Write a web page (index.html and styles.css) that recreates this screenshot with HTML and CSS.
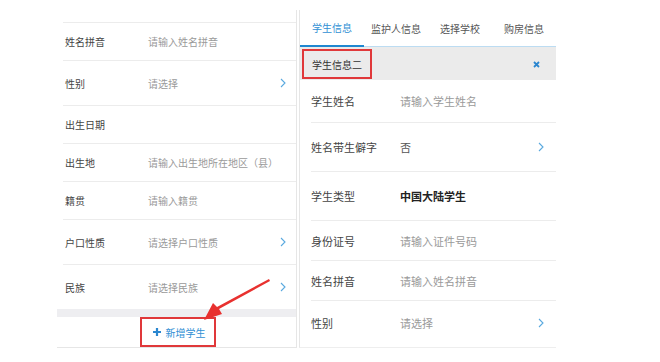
FILE: index.html
```html
<!DOCTYPE html>
<html lang="zh-CN">
<head>
  <meta charset="UTF-8">
  <meta name="viewport" content="width=device-width, initial-scale=1.0">
  <title>学生信息</title>
  <link rel="stylesheet" href="styles.css">
</head>
<body>
  <div class="page">
    <!-- left: first student form (scrolled) -->
    <div class="panel-left">
      <div class="form-row">
        <span class="label">姓名拼音</span>
        <span class="value">请输入姓名拼音</span>
      </div>
      <div class="form-row tall">
        <span class="label">性别</span>
        <span class="value">请选择</span>
        <svg class="chevron" width="6" height="10" viewBox="0 0 6 10"><polyline points="1,1 5,5 1,9"/></svg>
      </div>
      <div class="form-row">
        <span class="label">出生日期</span>
        <span class="value"></span>
      </div>
      <div class="form-row">
        <span class="label">出生地</span>
        <span class="value">请输入出生地所在地区（县）</span>
      </div>
      <div class="form-row">
        <span class="label">籍贯</span>
        <span class="value">请输入籍贯</span>
      </div>
      <div class="form-row tall">
        <span class="label">户口性质</span>
        <span class="value">请选择户口性质</span>
        <svg class="chevron" width="6" height="10" viewBox="0 0 6 10"><polyline points="1,1 5,5 1,9"/></svg>
      </div>
      <div class="form-row tall">
        <span class="label">民族</span>
        <span class="value">请选择民族</span>
        <svg class="chevron" width="6" height="10" viewBox="0 0 6 10"><polyline points="1,1 5,5 1,9"/></svg>
      </div>
      <div class="gap-strip"></div>
      <div class="add-bar">
        <span class="add-btn">
          <svg class="plus" width="8" height="8" viewBox="0 0 8 8"><path d="M4 0v8M0 4h8"/></svg>
          新增学生
        </span>
      </div>
    </div>

    <!-- right: tabs and second student -->
    <div class="panel-right">
      <div class="tabs">
        <span class="tab active">学生信息</span>
        <span class="tab">监护人信息</span>
        <span class="tab">选择学校</span>
        <span class="tab">购房信息</span>
      </div>
      <div class="section-head">
        <span class="section-title">学生信息二</span>
        <svg class="close" width="7" height="7" viewBox="0 0 7 7"><path d="M1 1l5 5M6 1l-5 5"/></svg>
      </div>
      <div class="form-row r1">
        <span class="label">学生姓名</span>
        <span class="value">请输入学生姓名</span>
      </div>
      <div class="form-row r2">
        <span class="label">姓名带生僻字</span>
        <span class="value filled">否</span>
        <svg class="chevron" width="6" height="10" viewBox="0 0 6 10"><polyline points="1,1 5,5 1,9"/></svg>
      </div>
      <div class="form-row r2">
        <span class="label">学生类型</span>
        <span class="value strong">中国大陆学生</span>
      </div>
      <div class="form-row r3">
        <span class="label">身份证号</span>
        <span class="value">请输入证件号码</span>
      </div>
      <div class="form-row r3">
        <span class="label">姓名拼音</span>
        <span class="value">请输入姓名拼音</span>
      </div>
      <div class="form-row r4">
        <span class="label">性别</span>
        <span class="value">请选择</span>
        <svg class="chevron" width="6" height="10" viewBox="0 0 6 10"><polyline points="1,1 5,5 1,9"/></svg>
      </div>
    </div>

    <svg class="pointer" width="80" height="50" viewBox="0 0 80 50">
      <polygon points="72,3 73,5 22,33 25,38 7,44 16,27 20,31" fill="#e8312f"/>
    </svg>
  </div>
</body>
</html>
```

FILE: styles.css
```css
* {
  margin: 0;
  padding: 0;
  box-sizing: border-box;
}

body {
  font-family: "Noto Sans CJK SC", "Noto Sans", sans-serif;
  background: #ffffff;
  color: #333333;
}

.page {
  position: relative;
  display: flex;
  gap: 2px;
  padding: 10px 0 0 57px;
  height: 362px;
}

/* left panel */
.panel-left {
  width: 240px;
  height: 338px;
  border-right: 1px solid #e6e6e6;
  border-bottom: 1px solid #e6e6e6;
  padding-top: 12px;
  font-size: 10px;
  display: flex;
  flex-direction: column;
}

.panel-left .form-row {
  height: 38px;
  margin-left: 6px;
  padding-left: 2px;
}

.panel-left .form-row.tall {
  height: 45px;
}

.panel-left .label {
  width: 83px;
}

.panel-left .chevron {
  margin-right: 10px;
}

.form-row {
  display: flex;
  align-items: center;
  border-top: 1px solid #ececec;
}

.label {
  flex-shrink: 0;
  color: #444444;
}

.value {
  flex: 1;
  color: #9a9a9a;
}

.value.filled {
  color: #555555;
}

.value.strong {
  color: #222222;
  font-weight: 700;
}

.chevron {
  fill: none;
  stroke: #5aa9df;
  stroke-width: 1.1;
}

.gap-strip {
  height: 8px;
  background: #eeeef1;
}

.add-bar {
  flex: 1;
  display: flex;
  justify-content: center;
  align-items: center;
}

.add-btn {
  display: flex;
  align-items: center;
  gap: 5px;
  height: 30px;
  padding: 0 8px 0 11px;
  border: 2px solid #e0383a;
  color: #2f8fd4;
  font-size: 10px;
  margin-left: 2px;
}

.plus {
  stroke: #2a86cf;
  stroke-width: 2.2;
}

/* right panel */
.panel-right {
  width: 257px;
  height: 338px;
  border-left: 1px solid #e6e6e6;
  border-bottom: 1px solid #eeeeee;
  font-size: 11px;
  display: flex;
  flex-direction: column;
}

.tabs {
  display: flex;
  height: 37px;
  border-bottom: 1px solid #bcdcf2;
  font-size: 10px;
}

.tab {
  display: flex;
  align-items: center;
  justify-content: center;
  color: #555555;
  width: 64px;
}

.tab.active {
  color: #2f8fd4;
  border-bottom: 2px solid #1f87d0;
  margin-bottom: -1px;
}

.section-head {
  height: 33px;
  background: #ebebeb;
  display: flex;
  align-items: center;
  justify-content: space-between;
  padding: 2px 16px 1px 2px;
}

.section-title {
  display: flex;
  align-items: center;
  height: 30px;
  padding: 0 8px;
  border: 2px solid #e0383a;
  font-size: 10px;
  color: #333333;
}

.close {
  stroke: #2a86cf;
  stroke-width: 1.8;
}

.panel-right .form-row {
  margin-left: 11px;
}

.panel-right .section-head + .form-row {
  border-top: none;
}

.panel-right .label {
  width: 89px;
}

.panel-right .chevron {
  margin-right: 12px;
}

.form-row.r1 { height: 42px; }
.form-row.r2 { height: 49px; }
.form-row.r3 { height: 40px; }
.form-row.r4 { height: 45px; }

/* red annotation arrow */
.pointer {
  position: absolute;
  left: 197px;
  top: 276px;
}
```
